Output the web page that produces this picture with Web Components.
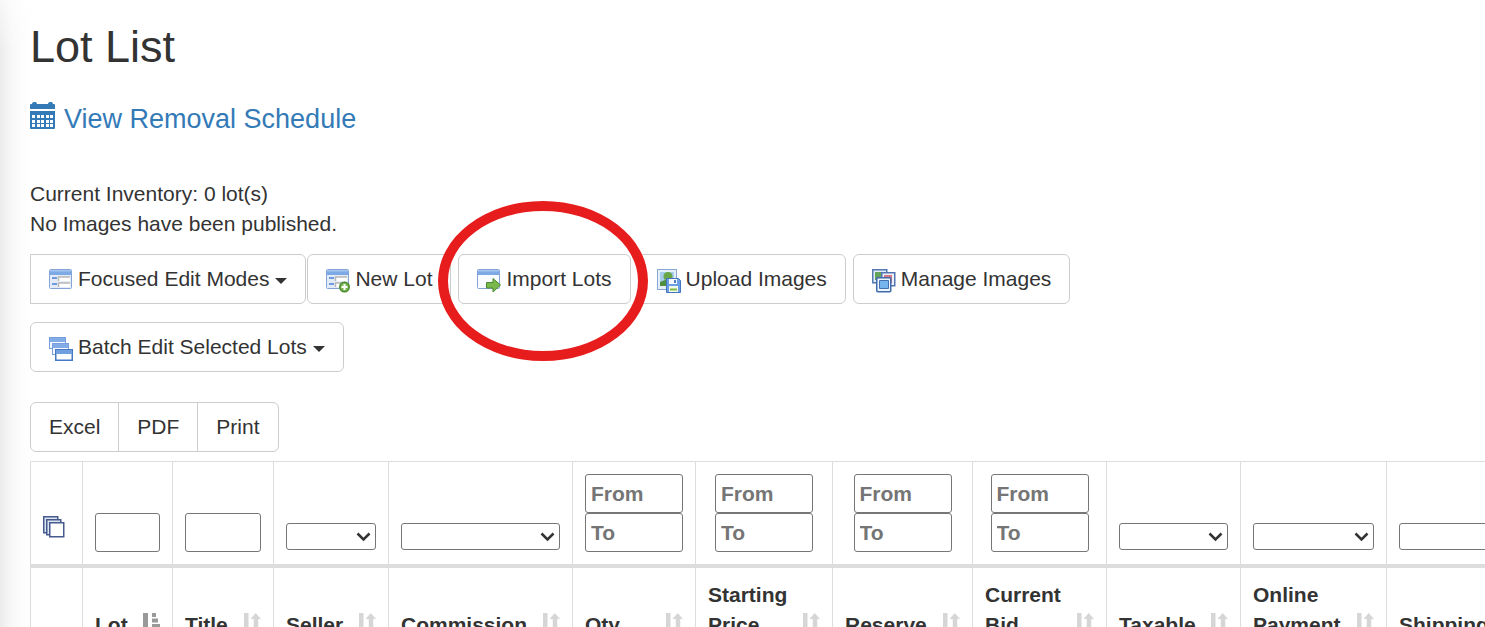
<!DOCTYPE html>
<html lang="en">
<head>
<meta charset="utf-8">
<title>Lot List</title>
<style>
html, body { margin: 0; height: 100%; }
body { overflow: hidden; background: #fff; color: #333; font: 21px/30px "Liberation Sans", Arial, sans-serif; }
</style>
</head>
<body>
<lot-page></lot-page>
<script>
const define = (name, markup, setup) => customElements.define(name, class extends HTMLElement {
  constructor() {
    super();
    this.attachShadow({ mode: 'open' });
  }
  connectedCallback() {
    this.shadowRoot.innerHTML = typeof markup === 'function' ? markup(this) : markup;
    if (setup) setup(this);
  }
});

const frame = `<rect x=".5" y=".5" width="22" height="19" rx="1" fill="#f8fbff" stroke="#84a4d8"/><path d="M1 1h21v5H1z" fill="#7da9e4"/><path d="M1 1h21v1.500H1z" fill="#a5c4ee"/>`;
const form = `${frame}<path d="M1 6h21v13H1z" fill="#e3ebf7"/><path d="M3 9h5M3 15h5" stroke="#6f9ae0" stroke-width="2"/><path d="M10 8h11v4H10zM10 14h11v4H10z" fill="#fff"/><path d="M9.500 12V8H21M9.500 18v-4H21" fill="none" stroke="#b8b8b8" stroke-width="1.500"/>`;
const win = (x, y) => `<g transform="translate(${x} ${y})"><rect x=".5" y=".5" width="16" height="11" fill="#f5f9ff" stroke="#789fdd"/><path d="M1 1h15v4H1z" fill="#83ace6"/></g>`;
const icons = {
  form,
  add: `${form}<circle cx="18.500" cy="18" r="5.500" fill="#4e8c2f"/><circle cx="18.500" cy="18" r="4" fill="#79b455"/><path d="M18.500 15v6M15.500 18h6" stroke="#fff" stroke-width="2"/>`,
  import: `${frame}<path d="M9.500 13.500h6.500V9.500l7.500 6.500-7.500 7v-4H9.500z" fill="#79b84d" stroke="#4a8a30"/>`,
  windows: win(0, 0) + win(3, 6) + `<g transform="translate(6 12)"><rect x=".75" y=".75" width="16.500" height="10.500" fill="#fff" stroke="#4478c4" stroke-width="1.500"/><path d="M1 1h16v4H1z" fill="#719edf"/></g>`,
  upload: `<rect x=".5" y=".5" width="19" height="20" fill="#e5effa" stroke="#86a8d2"/><path d="M3 3h14v14H3z" fill="#a5cbed"/><circle cx="11" cy="7.500" r="4.500" fill="#68a646"/><path d="M3 13l5-2 9 2v4H3z" fill="#4f9040"/><path d="M9.500 9.500h12l2 2v12h-14z" fill="#6b9ee5" stroke="#4375bd"/><path d="M12 10h8v5h-8z" fill="#f7faff"/><path d="M17 11h2v3h-2z" fill="#527fc1"/><path d="M12 17h9v6h-9z" fill="#f2faeb"/><path d="M13 20.500h7" stroke="#82bd42" stroke-width="2"/>`,
  manage: `<rect x=".75" y=".75" width="14" height="13" fill="#e3edf9" stroke="#5379ae" stroke-width="1.500"/><path d="M3 3h9v8H3z" fill="#63a35a"/><rect x="9.750" y="3.750" width="13" height="13" fill="#edf2fa" stroke="#5376b2" stroke-width="1.500"/><path d="M12 6h8v8h-8z" fill="#d47883"/><rect x="4.750" y="8.750" width="14" height="14" rx="1" fill="#edf5ff" stroke="#416ba9" stroke-width="1.500"/><path d="M7.500 11.500h9v8h-9z" fill="#76b4ed" stroke="#466fae"/>`
};

define('calendar-icon', `<style>:host{display:block;width:25px;height:27px}svg{display:block}</style>
<svg width="25" height="27" viewBox="0 0 25 27" aria-hidden="true"><path fill="#337ab7" d="M0 7V3q0-1 1-1h1q0-2 2-2h1q2 0 2 2h11q0-2 2-2h1q2 0 2 2h1q1 0 1 1v4zM0 9h25v17q0 1-1 1H1q-1 0-1-1z"/><path fill="#fff" d="${[13, 18, 22].map(y => [2, 7, 11, 16, 20].map(x => `M${x} ${y}h3v3h-3z`).join('')).join('')}"/></svg>`);

define('tool-button', el => `<style>
:host{display:block}
button{display:flex;align-items:center;height:50px;box-sizing:border-box;margin:0;padding:0 18px;border:1px solid #ccc;border-radius:var(--corner,6px);background:#fff;color:#333;font:inherit;white-space:nowrap}
svg{display:block;flex:none;width:24px;height:24px;margin:4px 5px 0 0}
.caret{border:6px solid transparent;border-top-color:#333;border-bottom:0;margin:4px 0 0 6px}
</style><button type="button">${el.getAttribute('icon') ? `<svg viewBox="0 0 24 24" aria-hidden="true">${icons[el.getAttribute('icon')]}</svg>` : ''}<slot></slot>${el.hasAttribute('menu') ? '<span class="caret"></span>' : ''}</button>`);

define('tool-bar', `<style>:host{display:flex;flex-wrap:wrap;gap:18px 7px}::slotted([joined]){margin-right:-6px}</style><slot></slot>`);

define('export-group', `<style>
:host{display:flex}
tool-button+tool-button{margin-left:-1px}
tool-button{--corner:0}
tool-button:first-child{--corner:6px 0 0 6px}
tool-button:last-child{--corner:0 6px 6px 0}
</style><div style="display:contents"></div>`, el => {
  el.shadowRoot.querySelector('div').innerHTML = ['Excel', 'PDF', 'Print'].map(t => `<tool-button>${t}</tool-button>`).join('');
});

define('highlight-ring', `<style>:host{display:block;position:absolute;width:190px;height:140px;border:10px solid #e71c1c;border-radius:50%;left:50%;top:50%;margin:-78px 0 0 -107px;z-index:2;pointer-events:none}</style>`);

define('range-filter', el => `<style>
:host{display:block;width:98px;margin:0 auto}
input{display:block;box-sizing:border-box;width:100%;height:39px;margin:0;padding:0 5px;border:1px solid #767676;border-radius:3px;background:#fff;color:inherit;font:inherit;outline:0}
input::placeholder{color:#757575;opacity:1}
</style><input type="text" placeholder="From" aria-label="${el.getAttribute('label')} from"><input type="text" placeholder="To" aria-label="${el.getAttribute('label')} to">`);

define('text-filter', el => `<style>
:host{display:block}
input{display:block;box-sizing:border-box;width:100%;height:39px;margin:0;padding:0 5px;border:1px solid #767676;border-radius:3px;background:#fff;font:inherit}
</style><input type="text" aria-label="${el.getAttribute('label')}">`);

define('select-filter', el => `<style>
:host{display:grid;align-items:center;padding-bottom:2px}
select,svg{grid-area:1/1}
select{appearance:none;box-sizing:border-box;width:100%;height:27px;margin:0;border:1px solid #767676;border-radius:3px;background:#fff}
svg{justify-self:end;margin-right:5px;pointer-events:none;z-index:1}
</style><select aria-label="${el.getAttribute('label')}"><option></option></select><svg width="15" height="10" viewBox="0 0 15 10" aria-hidden="true"><path d="M1.500 1.500l6 6 6-6" fill="none" stroke="#333" stroke-width="2.500"/></svg>`);

define('sort-icon', el => `<style>:host{display:block;flex:none}svg{display:block}</style>
<svg width="18" height="21" viewBox="0 0 18 21" aria-hidden="true">${el.hasAttribute('active')
  ? '<path fill="#999" d="M1 0h5v14h3l-5.500 6L-2 14h3zM10 0h4v4h-4zM10 5.500h6v4h-6zM10 11h8v4h-8zM10 16.500h8v4h-8z"/>'
  : '<path fill="#d6d6d6" d="M1 0h4.500v14h3l-5.250 6L-2 14h3zM12.750 0L18 6h-2.750v14h-4.500V6H7.500z"/>'}</svg>`);

define('lot-table', `<style>
:host{display:block}
table{table-layout:fixed;border-collapse:separate;border-spacing:0;width:1px;border-top:1px solid #ddd}
th{padding:12px;border-left:1px solid #ddd;vertical-align:bottom;text-align:left;font-weight:bold}
.filters th{border-bottom:4px solid #ddd}
.head{display:flex;align-items:flex-end;justify-content:space-between}
.head sort-icon{margin-bottom:6px}
.all{display:block;width:22px;height:22px;padding:0;border:0;background:none;margin-bottom:14px}
.all svg{display:block}
</style><table><colgroup></colgroup><thead><tr class="filters"></tr><tr class="names"></tr></thead></table>`, el => {
  const columns = [
    ['', 52, 'all'], ['Lot', 90, 'text'], ['Title', 101, 'text'], ['Seller', 115, 'select'],
    ['Commission', 184, 'select'], ['Qty', 123, 'range'], ['Starting<br>Price', 137, 'range'],
    ['Reserve', 140, 'range'], ['Current<br>Bid', 134, 'range'], ['Taxable', 134, 'select'],
    ['Online<br>Payment', 146, 'select'], ['Shipping', 150, 'select']
  ];
  const root = el.shadowRoot;
  root.querySelector('colgroup').innerHTML = columns.map(c => `<col style="width:${c[1]}px">`).join('');
  root.querySelector('.filters').innerHTML = columns.map(([name, , kind]) => `<th>${kind === 'all'
    ? '<button class="all" type="button" aria-label="Select all"><svg width="22" height="22" viewBox="0 0 22 22"><g fill="#dce4f1" stroke="#465a8e" stroke-width="1.500"><path d="M.75.75h14v16h-14z"/><path d="M3.750 3.750h14v15h-14z"/><path fill="#fff" d="M6.750 6.750h14v14h-14z"/></g></svg></button>'
    : `<${kind}-filter label="${name.replace('<br>', ' ')}"></${kind}-filter>`}</th>`).join('');
  root.querySelector('.names').innerHTML = columns.map(([name], i) => name
    ? `<th><div class="head"><span>${name}</span><sort-icon${i === 1 ? ' active' : ''}></sort-icon></div></th>` : '<th></th>').join('');
});

define('lot-page', `<style>
:host{display:block;box-sizing:border-box;height:100%;overflow:hidden;padding:22px 0 0 30px;background:linear-gradient(rgba(255,255,255,.6),rgba(255,255,255,0) 50px),linear-gradient(to right,#ececec,#f8f8f8 12px,#fdfdfd 24px,#fff 34px)}
h1{margin:0;font-size:45px;line-height:50px;font-weight:normal}
.schedule{display:flex;align-items:flex-start;gap:9px;width:max-content;margin-top:30px;color:#337ab7;font-size:27px;line-height:34px;text-decoration:none}
p{margin:43px 0 15px}
tool-bar{width:1140px;max-width:100%}
.target{position:relative}
export-group{margin:30px 0 9px}
</style>
<h1>Lot List</h1>
<a class="schedule" href="#schedule"><calendar-icon></calendar-icon><span>View Removal Schedule</span></a>
<p>Current Inventory: 0 lot(s)<br>No Images have been published.</p>
<tool-bar>
<tool-button icon="form" menu joined style="--corner:0 6px 6px 0">Focused Edit Modes</tool-button>
<tool-button icon="add">New Lot</tool-button>
<div class="target"><tool-button icon="import">Import Lots</tool-button><highlight-ring></highlight-ring></div>
<tool-button icon="upload">Upload Images</tool-button>
<tool-button icon="manage">Manage Images</tool-button>
<tool-button icon="windows" menu>Batch Edit Selected Lots</tool-button>
</tool-bar>
<export-group></export-group>
<lot-table></lot-table>`);
</script>
</body>
</html>
